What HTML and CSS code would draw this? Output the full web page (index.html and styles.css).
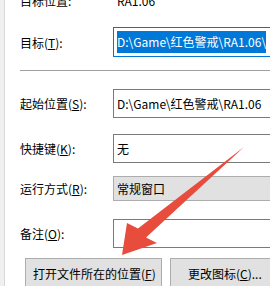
FILE: index.html
```html
<!DOCTYPE html>
<html>
<head>
<meta charset="utf-8">
<link rel="stylesheet" href="styles.css">
</head>
<body>
<div class="panel">
  <div class="row row-top">
    <span class="label">目标位置:</span>
    <span class="value">RA1.06</span>
  </div>
  <div class="row row-target">
    <span class="label">目标(<u>T</u>):</span>
    <div class="field focused"><span class="sel">D:\Game\红色警戒\RA1.06\</span></div>
  </div>
  <div class="sep"></div>
  <div class="row row-start">
    <span class="label">起始位置(<u>S</u>):</span>
    <div class="field">D:\Game\红色警戒\RA1.06</div>
  </div>
  <div class="row row-key">
    <span class="label">快捷键(<u>K</u>):</span>
    <div class="field">无</div>
  </div>
  <div class="row row-run">
    <span class="label">运行方式(<u>R</u>):</span>
    <div class="field combo">常规窗口</div>
  </div>
  <div class="row row-note">
    <span class="label">备注(<u>O</u>):</span>
    <div class="field"></div>
  </div>
  <div class="buttons">
    <div class="btn btn-open">打开文件所在的位置(<u>F</u>)</div>
    <div class="btn btn-icon">更改图标(<u>C</u>)...</div>
  </div>
  <svg class="arrow" width="270" height="286" viewBox="0 0 270 286">
    <polygon points="244,147 146,237.5 157,243 122,255 127,223 138,228.5" fill="#e74c3c"/>
  </svg>
</div>
</body>
</html>
```

FILE: styles.css
```css
html, body {
  margin: 0;
  padding: 0;
}
body {
  width: 270px;
  height: 286px;
  overflow: hidden;
  background: #f0f0f0;
  font-family: "Noto Sans CJK SC", "Liberation Sans", sans-serif;
  font-size: 12px;
  color: #000;
}
.panel {
  position: relative;
  margin-left: 4px;
  border-left: 1px solid #d9d9d9;
  background: #fff;
  height: 286px;
  padding-left: 15px;
  display: flex;
  flex-direction: column;
  overflow: hidden;
}
.row {
  display: flex;
  align-items: center;
  flex-shrink: 0;
}
.label {
  width: 93px;
  flex-shrink: 0;
  white-space: nowrap;
}
u {
  text-decoration: underline;
  text-underline-offset: 1px;
}
.value {
  padding-left: 4px;
  white-space: nowrap;
}
.row-top {
  height: 16px;
  margin-top: -8px;
}
.field {
  flex: 1;
  min-width: 0;
  box-sizing: border-box;
  border: 1px solid #7a7a7a;
  border-right: none;
  background: #fff;
  padding-left: 3px;
  display: flex;
  align-items: center;
  white-space: nowrap;
  overflow: hidden;
}
.row-target {
  margin-top: 19px;
}
.row-target .field {
  height: 30px;
  border-color: #0078d7;
}
.sel {
  background: #0078d7;
  color: #fff;
  line-height: 22px;
  height: 22px;
  display: inline-block;
}
.sep {
  margin-top: 13px;
  height: 1px;
  background: #a0a0a0;
  flex-shrink: 0;
}
.row-start {
  margin-top: 18px;
}
.row-start .field,
.row-key .field,
.row-note .field {
  height: 29px;
}
.row-key {
  margin-top: 16px;
}
.row-run {
  margin-top: 13px;
}
.combo {
  height: 25px;
  background: #e1e1e1;
  border-color: #adadad;
}
.row-note {
  margin-top: 18px;
}
.buttons {
  margin-top: 10px;
  margin-left: 5px;
  display: flex;
  gap: 8px;
  flex-shrink: 0;
}
.btn {
  flex-shrink: 0;
  box-sizing: border-box;
  height: 30px;
  background: #e1e1e1;
  border: 1px solid #adadad;
  display: flex;
  align-items: center;
  white-space: nowrap;
}
.btn-open {
  width: 137px;
  padding-left: 7px;
}
.btn-icon {
  width: 100px;
  padding-left: 17px;
  border-right: none;
}
.arrow {
  position: absolute;
  left: -5px;
  top: 0;
  pointer-events: none;
}
```
